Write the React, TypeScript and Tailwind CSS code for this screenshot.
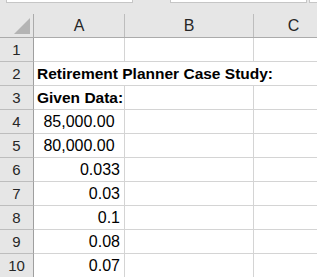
import React from 'react'

const rows = [
  { n: 1, a: '', align: 'right' },
  { n: 2, a: 'Retirement Planner Case Study:', bold: true, span: true },
  { n: 3, a: 'Given Data:', bold: true },
  { n: 4, a: '85,000.00', align: 'center' },
  { n: 5, a: '80,000.00', align: 'center' },
  { n: 6, a: '0.033', align: 'right' },
  { n: 7, a: '0.03', align: 'right' },
  { n: 8, a: '0.1', align: 'right' },
  { n: 9, a: '0.08', align: 'right' },
  { n: 10, a: '0.07', align: 'right' },
]

function RowHead({ n }: { n: number }) {
  return (
    <div className="w-[34px] shrink-0 h-full bg-[#e6e6e6] border-r border-b border-r-[#9f9f9f] border-b-[#bdbdbd] flex items-end justify-center pb-[3px] text-[15px] leading-4 text-[#262626]">
      {n}
    </div>
  )
}

function App() {
  return (
    <div className="w-[317px] h-[277px] overflow-hidden bg-white font-['Liberation_Sans',Arial,sans-serif] text-black">
      <div className="h-[3px] bg-[#e6e6e6] flex">
        <div className="ml-[6px] w-[127px] bg-white border-x border-b border-[#c6c6c6]"></div>
        <div className="ml-[37px] w-[137px] bg-white border-x border-b border-[#c6c6c6]"></div>
        <div className="ml-[2px] flex-1 bg-white border-l border-b border-[#c6c6c6]"></div>
      </div>
      <div className="h-[11px] bg-[#e6e6e6]"></div>
      <div className="h-[24px] flex bg-[#e6e6e6] border-b border-[#ababab] text-[16px] leading-4 text-[#262626]">
        <div className="w-[34px] shrink-0 border-r border-[#ababab] flex items-end justify-end pr-[3px] pb-[3px]">
          <svg width="16" height="16" viewBox="0 0 16 16">
            <polygon points="16,0 16,16 0,16" fill="#b4b4b4" />
          </svg>
        </div>
        <div className="w-[91px] shrink-0 border-r border-[#bdbdbd] flex items-end justify-center pb-[3px]">A</div>
        <div className="w-[129px] shrink-0 border-r border-[#bdbdbd] flex items-end justify-center pb-[3px]">B</div>
        <div className="w-[79px] shrink-0 flex items-end justify-center pb-[3px]">C</div>
      </div>
      {rows.map(r => (
        <div key={r.n} className="h-[24px] flex">
          <RowHead n={r.n} />
          {r.span
            ? (
                <div className="flex-1 border-b border-[#d4d4d4] flex items-end pl-[3px] pb-[3px] whitespace-nowrap font-bold text-[15.5px] leading-4">
                  {r.a}
                </div>
              )
            : (
                <>
                  <div
                    className={`w-[91px] shrink-0 border-r border-b border-[#d4d4d4] flex items-end pb-[3px] whitespace-nowrap leading-4 ${
                      r.bold
                        ? 'pl-[3px] font-bold text-[15.5px]'
                        : r.align === 'center'
                          ? 'justify-center text-[16px]'
                          : 'justify-end pr-[4px] text-[16px]'
                    }`}
                  >
                    {r.a}
                  </div>
                  <div className="w-[129px] shrink-0 border-r border-b border-[#d4d4d4]"></div>
                  <div className="flex-1 border-b border-[#d4d4d4]"></div>
                </>
              )}
        </div>
      ))}
    </div>
  )
}

export default App
